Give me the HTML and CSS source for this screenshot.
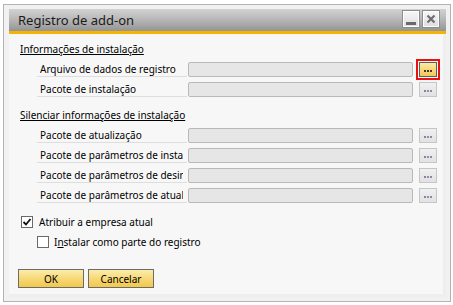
FILE: index.html
```html
<!DOCTYPE html>
<html lang="pt">
<head>
  <meta charset="UTF-8" />
  <title>Registro de add-on</title>
  <link rel="stylesheet" href="styles.css">
</head>
<body>

  <div class="window">
    <!-- Title bar -->
    <div class="titlebar">
      <span class="title">Registro de add-on</span>
      <div class="title-btns">
        <button class="tbtn"><span class="min-bar"></span></button>
        <button class="tbtn">
          <svg width="10" height="10" viewBox="0 0 10 10"><path d="M1.5 1.5 L8.5 8.5 M8.5 1.5 L1.5 8.5" stroke="#6e6e6e" stroke-width="2.2"/></svg>
        </button>
      </div>
    </div>

    <div class="panel">
      <div class="group">
        <div class="group-title">Informações de instalação</div>
        <div class="row">
          <div class="label"><span>Arquivo de dados de registro</span></div>
          <div class="field"></div>
          <button class="pick active"><span class="dots"></span></button>
        </div>
        <div class="row">
          <div class="label"><span>Pacote de instalação</span></div>
          <div class="field"></div>
          <button class="pick"><span class="dots"></span></button>
        </div>
      </div>

      <div class="group">
        <div class="group-title">Silenciar informações de instalação</div>
        <div class="row">
          <div class="label"><span>Pacote de atualização</span></div>
          <div class="field"></div>
          <button class="pick"><span class="dots"></span></button>
        </div>
        <div class="row">
          <div class="label"><span>Pacote de parâmetros de instalação</span></div>
          <div class="field"></div>
          <button class="pick"><span class="dots"></span></button>
        </div>
        <div class="row">
          <div class="label"><span>Pacote de parâmetros de desinstalação</span></div>
          <div class="field"></div>
          <button class="pick"><span class="dots"></span></button>
        </div>
        <div class="row">
          <div class="label"><span>Pacote de parâmetros de atualização</span></div>
          <div class="field"></div>
          <button class="pick"><span class="dots"></span></button>
        </div>
      </div>

      <div class="checks">
        <label class="check-row">
          <span class="box">
            <svg width="10" height="10" viewBox="0 0 10 10"><path d="M1.5 5 L4 7.5 L8.5 2" fill="none" stroke="#111" stroke-width="1.8"/></svg>
          </span>
          <span>Atribuir a empresa atual</span>
        </label>
        <label class="check-row sub">
          <span class="box"></span>
          <span>I<u>n</u>stalar como parte do registro</span>
        </label>
      </div>

      <div class="actions">
        <button class="btn">OK</button>
        <button class="btn">Cancelar</button>
      </div>
    </div>
  </div>

</body>
</html>
```

FILE: styles.css
```css
body {
  margin: 0;
  background: #ffffff;
  font-family: 'Noto Sans', sans-serif;
  font-size: 10px;
  color: #000;
}
/* Window frame */
.window {
  margin: 4px 2px 3px 3px;
  height: 298px;
  box-sizing: border-box;
  border: 1px solid #b3b3b3;
  background: #f1f1f1;
  padding: 4px 4px 4px 5px;
}
.titlebar {
  height: 22px;
  display: flex;
  justify-content: space-between;
  background: linear-gradient(to bottom, #d2d2d2 0%, #b6b6b6 50%, #949494 100%);
  border-bottom: 3px solid #f5b400;
}
.title {
  padding-left: 9px;
  line-height: 22px;
  font-size: 13px;
  color: #1a1a1a;
}
.title-btns {
  display: flex;
  gap: 2px;
  padding: 1px 6px 0 0;
}
.tbtn {
  width: 18px;
  height: 18px;
  padding: 0;
  border: 1px solid #8c8c8c;
  background: linear-gradient(to bottom, #f7f7f7, #dedede);
  box-shadow: inset 0 0 0 1px #ffffff;
  display: flex;
  align-items: center;
  justify-content: center;
}
.min-bar {
  width: 10px;
  height: 3px;
  margin-top: 9px;
  background: #6a6a6a;
}
/* Content panel */
.panel {
  height: 263px;
  box-sizing: border-box;
  display: flex;
  flex-direction: column;
  background: #f7f7f7;
  border-right: 3px solid #eeeeee;
  border-bottom: 3px solid #eeeeee;
  padding: 7px 0 0 11px;
}
.group {
  display: flex;
  flex-direction: column;
  margin-bottom: 5px;
}
.group-title {
  height: 16px;
  line-height: 16px;
  text-decoration: underline;
  margin-bottom: 5px;
}
.row {
  display: flex;
  height: 15px;
  margin: 0 0 5px 17px;
}
.label {
  width: 150px;
  box-sizing: border-box;
  padding: 0 4px 0 3px;
  border-bottom: 1px solid #dedede;
  margin-right: 1px;
}
.label span {
  display: block;
  overflow: hidden;
  white-space: nowrap;
  line-height: 14px;
}
.field {
  width: 225px;
  box-sizing: border-box;
  background: #e6e6e6;
  border: 1px solid #b9b9b9;
  border-radius: 2px;
}
.pick {
  width: 18px;
  height: 15px;
  margin-left: 6px;
  padding: 0;
  border: 1px solid #c6c6c6;
  background: linear-gradient(to bottom, #f0f0f0, #e2e2e2);
  display: flex;
  align-items: flex-end;
  justify-content: center;
}
.dots {
  width: 2px;
  height: 2px;
  margin: 0 6px 4px 0;
  background: #8f7f9c;
  box-shadow: 3px 0 0 #8f8fa8, 6px 0 0 #a0809a;
}
.pick.active {
  border-color: #5f5f5f;
  background: linear-gradient(to bottom, #fbeaa4, #f1c755);
  outline: 2px solid #e81010;
  outline-offset: 1px;
}
.pick.active .dots {
  background: #5a3020;
  box-shadow: 3px 0 0 #403050, 6px 0 0 #603020;
}
/* Checkboxes */
.checks {
  display: flex;
  flex-direction: column;
  margin-top: 1px;
}
.check-row {
  display: flex;
  align-items: center;
  gap: 6px;
  height: 16px;
  margin: 0 0 4px 1px;
}
.check-row.sub {
  margin-left: 17px;
  gap: 5px;
}
.box {
  width: 12px;
  height: 12px;
  box-sizing: border-box;
  border: 1px solid #6a6a6a;
  background: #ffffff;
  display: flex;
  align-items: center;
  justify-content: center;
}
/* Bottom buttons */
.actions {
  display: flex;
  gap: 4px;
  margin: 15px 0 0 -2px;
}
.btn {
  width: 66px;
  height: 19px;
  padding: 0;
  border: 1px solid #6b6b6b;
  background: linear-gradient(to bottom, #fcecab 0%, #f6d56f 60%, #f2c84a 100%);
  font-family: 'Noto Sans', sans-serif;
  font-size: 10px;
  color: #000;
}
```
